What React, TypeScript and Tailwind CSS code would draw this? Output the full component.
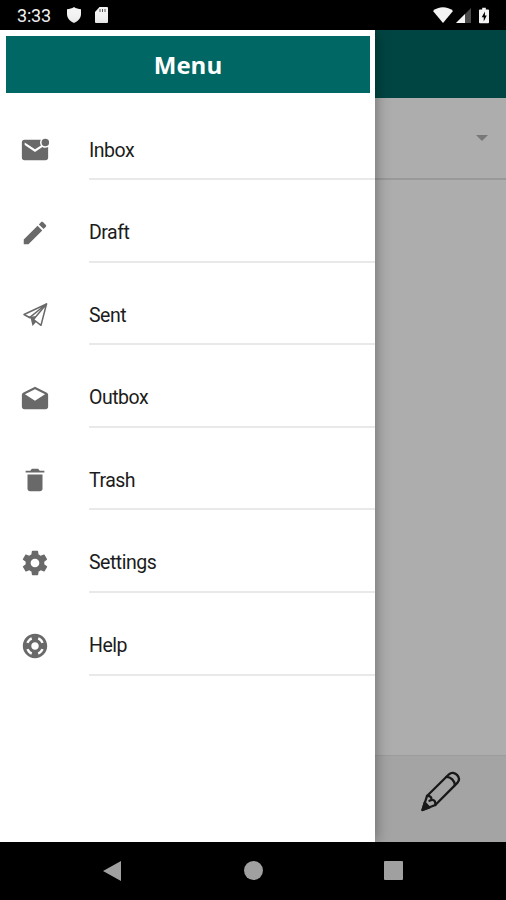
import type { IconType } from 'react-icons';
import {
  IoMdCreate,
  IoMdHelpBuoy,
  IoMdMailOpen,
  IoMdMailUnread,
  IoMdSettings,
  IoMdTrash,
} from 'react-icons/io';

type MenuItemProps = {
  label: string;
  icon: IconType | typeof PaperPlane;
};

function PaperPlane({ className }: { className?: string }) {
  return (
    <svg viewBox="0 0 30 30" className={className} strokeLinejoin="round">
      <path d="M26.500 4 4 14.500l5.500 3.200Z" fill="none" stroke="currentColor" strokeWidth="1.5" />
      <path d="M26.500 4 13.500 19.500l7.500 5.800Z" fill="none" stroke="currentColor" strokeWidth="1.5" />
      <path d="m4 14.500 6.800 4.200L12.500 26l3.800-4.300-2.800-2.200L16 16l-5.500.7Z" fill="currentColor" />
    </svg>
  );
}

const items: MenuItemProps[] = [
  { label: 'Inbox', icon: IoMdMailUnread },
  { label: 'Draft', icon: IoMdCreate },
  { label: 'Sent', icon: PaperPlane },
  { label: 'Outbox', icon: IoMdMailOpen },
  { label: 'Trash', icon: IoMdTrash },
  { label: 'Settings', icon: IoMdSettings },
  { label: 'Help', icon: IoMdHelpBuoy },
];

function MenuItem({ label, icon: Icon }: MenuItemProps) {
  return (
    <li className="flex h-[82.6px] pl-[20px]">
      <Icon className="mt-[37.5px] size-[30px] shrink-0 text-[#696969]" />
      <span className="ml-[39px] flex-1 border-b-2 border-[#e9e9e9] pt-[40px] text-[19.5px] leading-[26px] tracking-[-0.5px] text-[#1c1c1c]">
        {label}
      </span>
    </li>
  );
}

function StatusBar() {
  return (
    <header className="flex h-[30px] shrink-0 items-center bg-black pr-[17px] pl-[17px] text-[#f4f4f4]">
      <span className="w-[35px] pt-[2px] text-[18px] leading-[28px] tracking-[-0.2px]">3:33</span>
      <svg viewBox="0 0 14 16" className="ml-[15px] h-[16px] w-[14px]" fill="currentColor">
        <path d="M7 0c2 1.500 4.500 2 7 2.200V7c0 4-3 7.500-7 9C3 14.500 0 11 0 7V2.200C2.500 2 5 1.500 7 0Z" />
      </svg>
      <svg viewBox="0 0 13 16" className="ml-[14px] h-[16px] w-[13px]" fill="currentColor">
        <path d="M4.500 0H12a1 1 0 0 1 1 1v14a1 1 0 0 1-1 1H1a1 1 0 0 1-1-1V5Z" />
        <path d="M5 2v3M7.500 2v3M10 2v3" stroke="#555" strokeWidth="1" />
      </svg>
      <svg viewBox="0 0 20 16" className="ml-auto h-[16px] w-[20px]" fill="currentColor">
        <path d="M10 16 0 4C5.500-1 14.500-1 20 4Z" />
      </svg>
      <svg viewBox="0 0 15 15" className="ml-[3px] h-[15px] w-[15px]" fill="currentColor">
        <path d="M15 0v15H0Z" fill="#4a4a4a" />
        <path d="M9 6v9H0Z" />
      </svg>
      <svg viewBox="0 0 11 17" className="ml-[8px] h-[17px] w-[10px]" fill="currentColor">
        <path d="M3.500 0h4v2H10a1 1 0 0 1 1 1v13a1 1 0 0 1-1 1H1a1 1 0 0 1-1-1V3a1 1 0 0 1 1-1h2.500Z" />
        <path d="M6.500 4 3 10.500h2.200V15L8.500 8.500H6.500Z" fill="#000" />
      </svg>
    </header>
  );
}

function ComposeIcon() {
  return (
    <svg
      viewBox="0 0 42 42"
      className="size-[42px]"
      fill="none"
      stroke="#181818"
      strokeWidth="2.3"
      strokeLinejoin="round"
      strokeLinecap="round"
    >
      <path d="M2.500 39 7 25 29 3.300c2.500-2.300 5.800-1.600 8 .6s2.700 5.300.3 8L15.300 34Z" />
      <path d="M26.500 5.800c4.300 0 8.300 4 8.300 8.500M7 25c3.200-.3 5 1.200 4.300 4 3-.6 4.500 1.500 4 5M11.300 29l-1.800.8" />
      <path d="m2.500 39 2.200-7.500 4.800 5Z" fill="#181818" />
    </svg>
  );
}

export default function App() {
  return (
    <div className="flex h-[900px] w-[506px] flex-col overflow-hidden bg-black font-[Roboto,sans-serif]">
      <StatusBar />

      <main className="flex h-[811.5px] shrink-0">
        <nav className="z-10 w-[375px] shrink-0 bg-white px-[6px] pt-[6px] shadow-[0_0_14px_rgba(0,0,0,0.4)]">
          <h1 className="flex h-[57px] w-[364px] items-center justify-center bg-[#006764] pt-px font-['Open_Sans',sans-serif] text-[24px] font-bold text-white">
            Menu
          </h1>
          <ul className="-mx-[6px] mt-[4.5px]">
            {items.map((item) => (
              <MenuItem key={item.label} {...item} />
            ))}
          </ul>
        </nav>

        {/* Mailbox behind the open drawer */}
        <section className="flex flex-1 flex-col bg-[#adadad]">
          <div className="h-[68px] bg-[#004542]" />
          <div className="flex h-[82px] items-center justify-end border-b-2 border-[#999] pr-[18px]">
            <svg viewBox="0 0 12 6" className="h-[6px] w-[12px]">
              <path d="M0 0h12L6 6Z" fill="#787878" />
            </svg>
          </div>
          <div className="flex-1" />
          <footer className="flex h-[87px] justify-center border-t border-[#9c9c9c] bg-[#a4a4a4] pt-[15px]">
            <ComposeIcon />
          </footer>
        </section>
      </main>

      <footer className="z-20 flex flex-1 items-center bg-black pl-[103px] text-[#a0a0a0]">
        <svg viewBox="0 0 18 20" className="h-[20px] w-[18px]" fill="currentColor">
          <path d="M18 0v20L0 10Z" />
        </svg>
        <span className="ml-[123px] size-[19px] rounded-full bg-[#a0a0a0]" />
        <span className="ml-[121px] size-[19px] rounded-[1px] bg-[#a0a0a0]" />
      </footer>
    </div>
  );
}
